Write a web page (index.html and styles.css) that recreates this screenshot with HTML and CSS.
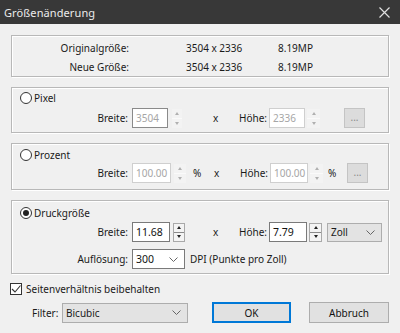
FILE: index.html
```html
<!DOCTYPE html>
<html lang="de">
<head>
<meta charset="utf-8">
<title>Größenänderung</title>
<link rel="stylesheet" href="styles.css">
</head>
<body>
<div class="dialog">
  <div class="titlebar">
    <span class="title">Größenänderung</span>
    <svg class="close" width="11" height="11" viewBox="0 0 11 11"><path d="M0.5 0.5 L10.5 10.5 M10.5 0.5 L0.5 10.5" stroke="#e0e0e0" stroke-width="1.2" fill="none"/></svg>
  </div>
  <div class="content">
    <div class="box info">
      <div class="irow"><span class="ilbl">Originalgröße:</span><span class="idim">3504 x 2336</span><span>8.19MP</span></div>
      <div class="irow"><span class="ilbl">Neue Größe:</span><span class="idim">3504 x 2336</span><span>8.19MP</span></div>
    </div>

    <div class="box group g-pixel">
      <div class="radiorow"><span class="radio"></span><span>Pixel</span></div>
      <div class="row">
        <span class="lbl">Breite:</span>
        <span class="inp dis focus w36">3504</span>
        <span class="spin dis s-pix"><i class="up"></i><i class="dn"></i></span>
        <span class="unit"></span>
        <span class="x">x</span>
        <span class="lbl2">Höhe:</span>
        <span class="inp2 dis w36">2336</span>
        <span class="spin2 dis"><i class="up"></i><i class="dn"></i></span>
        <span class="unit2"></span>
        <span class="dots">...</span>
      </div>
    </div>

    <div class="box group g-pct">
      <div class="radiorow"><span class="radio"></span><span>Prozent</span></div>
      <div class="row">
        <span class="lbl">Breite:</span>
        <span class="inp dis w39">100.00</span>
        <span class="spin dis"><i class="up"></i><i class="dn"></i></span>
        <span class="unit">%</span>
        <span class="x">x</span>
        <span class="lbl2">Höhe:</span>
        <span class="inp2 dis">100.00</span>
        <span class="spin2 dis"><i class="up"></i><i class="dn"></i></span>
        <span class="unit2">%</span>
        <span class="dots">...</span>
      </div>
    </div>

    <div class="box group g-druck">
      <div class="radiorow"><span class="radio on"></span><span>Druckgröße</span></div>
      <div class="row">
        <span class="lbl">Breite:</span>
        <span class="inp en">11.68</span>
        <span class="spin en"><i class="up"></i><i class="dn"></i></span>
        <span class="unit"></span>
        <span class="x">x</span>
        <span class="lbl2">Höhe:</span>
        <span class="inp2 en">7.79</span>
        <span class="spin2 en"><i class="up"></i><i class="dn"></i></span>
        <span class="combo zoll">Zoll<svg width="9" height="5" viewBox="0 0 9 5"><path d="M0.5 0.5 L4.5 4.5 L8.5 0.5" stroke="#666" fill="none"/></svg></span>
      </div>
      <div class="row row2">
        <span class="lbl">Auflösung:</span>
        <span class="combo dpi">300<svg width="9" height="5" viewBox="0 0 9 5"><path d="M0.5 0.5 L4.5 4.5 L8.5 0.5" stroke="#666" fill="none"/></svg></span>
        <span class="dpitext">DPI (Punkte pro Zoll)</span>
      </div>
    </div>

    <div class="checkrow">
      <span class="check"><svg width="10" height="10" viewBox="0 0 10 10"><path d="M1 5 L4 8 L9.5 1.5" stroke="#333" stroke-width="1.1" fill="none"/></svg></span>
      <span>Seitenverhältnis beibehalten</span>
    </div>

    <div class="bottom">
      <span class="flbl">Filter:</span>
      <span class="combo filter">Bicubic<svg width="9" height="5" viewBox="0 0 9 5"><path d="M0.5 0.5 L4.5 4.5 L8.5 0.5" stroke="#666" fill="none"/></svg></span>
      <span class="btn ok">OK</span>
      <span class="btn cancel">Abbruch</span>
    </div>
  </div>
</div>
</body>
</html>
```
FILE: styles.css
```css
* { box-sizing: border-box; }
html, body { margin: 0; padding: 0; }
body {
  width: 400px;
  height: 333px;
  overflow: hidden;
  background: #f0f0f0;
  font-family: "Noto Sans", "Open Sans", sans-serif;
  font-size: 10px;
  color: #1a1a1a;
}
.dialog { width: 400px; height: 333px; background: #f0f0f0; }
.titlebar {
  height: 24px;
  background: #383838;
  display: flex;
  align-items: center;
  justify-content: space-between;
  padding: 0 10px 0 4px;
}
.title { color: #ececec; font-size: 11px; letter-spacing: 0.1px; }
.close { display: block; }

.content { padding: 11px 11px 0 11px; }

.box {
  border: 1px solid #b8b8b8;
  box-shadow: inset 1px 1px 0 #fff, 1px 1px 0 #fff;
}
.info { height: 42px; padding-top: 2px; }
.irow { height: 19px; display: flex; align-items: center; }
.ilbl { width: 117px; text-align: right; }
.idim { margin-left: 57px; width: 92px; }

.group { margin-top: 10px; }
.g-pixel { height: 46px; padding-top: 3px; }
.g-pct { height: 47px; padding-top: 4px; }
.g-druck { height: 74px; padding-top: 5px; margin-top: 10px; }

.radiorow { height: 14px; display: flex; align-items: center; padding-left: 8px; }
.radio {
  width: 12px; height: 12px;
  border: 1px solid #333;
  border-radius: 50%;
  background: #fff;
  margin-right: 2px;
  display: flex; align-items: center; justify-content: center;
}
.radio.on::after {
  content: "";
  width: 6px; height: 6px;
  border-radius: 50%;
  background: #222;
}

.row { display: flex; align-items: center; height: 20px; margin-top: 3px; }
.g-pct .row { margin-top: 1px; }
.g-druck .row { margin-top: 2px; }
.g-druck .row2 { margin-top: 7px; }

.lbl { width: 116px; text-align: right; margin-right: 4px; }
.inp, .inp2 {
  width: 38px; height: 20px;
  background: #fff;
  border: 1px solid #7a7a7a;
  padding-left: 3px;
  display: flex; align-items: center;
}
.inp2 { margin-left: 2px; }
.w36 { width: 36px; }
.w39 { width: 39px; }
.inp.dis, .inp2.dis { border-color: #cfcfcf; color: #a6a6a6; }
.inp.dis.focus { border-color: #8a8a8a; }
.inp.en, .inp2.en { border-color: #7a7a7a; color: #111; font-size: 10.5px; }

.spin, .spin2 {
  width: 12px; height: 19px;
  display: flex; flex-direction: column;
}
.spin { margin-left: 3px; }
.s-pix { margin-left: 4px; width: 10px; }
.spin2 { margin-left: 2px; width: 13px; }
.spin i, .spin2 i {
  flex: 1;
  display: flex; align-items: center; justify-content: center;
}
.spin.dis i, .spin2.dis i { background: #f3f3f3; }
.spin.dis i + i, .spin2.dis i + i { border-top: 1px solid #fafafa; }
.spin.en, .spin2.en { border: 1px solid #a9a9a9; background: #f4f4f4; }
.spin.en i + i, .spin2.en i + i { border-top: 1px solid #8a8a8a; }
.spin i.up::after, .spin2 i.up::after {
  content: ""; width: 0; height: 0;
  border-left: 2.5px solid transparent;
  border-right: 2.5px solid transparent;
  border-bottom: 3px solid #b0b0b0;
}
.spin i.dn::after, .spin2 i.dn::after {
  content: ""; width: 0; height: 0;
  border-left: 2.5px solid transparent;
  border-right: 2.5px solid transparent;
  border-top: 3px solid #b0b0b0;
}
.spin.en i.up::after, .spin2.en i.up::after { border-bottom-color: #222; }
.spin.en i.dn::after, .spin2.en i.dn::after { border-top-color: #222; }

.unit { width: 26px; padding-left: 7px; }
.s-pix + .unit { width: 29px; }
.x { width: 25px; padding-left: 2px; }
.lbl2 { width: 31px; text-align: right; }
.unit2 { width: 24px; padding-left: 5px; }
.dots {
  width: 21px; height: 20px;
  background: #dcdcdc;
  border: 1px solid #c4c4c4;
  color: #8a8a8a;
  display: flex; align-items: center; justify-content: center;
  padding-bottom: 3px;
}

.combo {
  height: 20px;
  display: flex; align-items: center; justify-content: space-between;
  padding: 0 6px 0 3px;
  border: 1px solid #adadad;
  background: #e3e3e3;
}
.combo svg { display: block; }
.zoll { width: 55px; margin-left: 5px; height: 19px; }
.dpi { width: 53px; background: #fff; border-color: #7a7a7a; color: #111; font-size: 10.5px; }
.dpitext { margin-left: 5px; }

.checkrow {
  display: flex; align-items: center;
  margin-top: 9px; margin-left: -1px;
  height: 12px;
}
.check {
  width: 12px; height: 12px;
  border: 1px solid #333;
  background: #fff;
  margin-right: 4px;
  display: flex; align-items: center; justify-content: center;
}
.check svg { display: block; }

.bottom { display: flex; align-items: center; margin-top: 7px; height: 21px; }
.flbl { margin-left: 21px; width: 30px; }
.filter { width: 126px; height: 20px; }
.btn {
  height: 21px;
  background: #e1e1e1;
  border: 1px solid #adadad;
  display: flex; align-items: center; justify-content: center;
  color: #111;
}
.ok { width: 79px; margin-left: 24px; border-color: #0078d7; box-shadow: inset 0 0 0 1px #0078d7; }
.cancel { width: 80px; margin-left: 18px; }
```
